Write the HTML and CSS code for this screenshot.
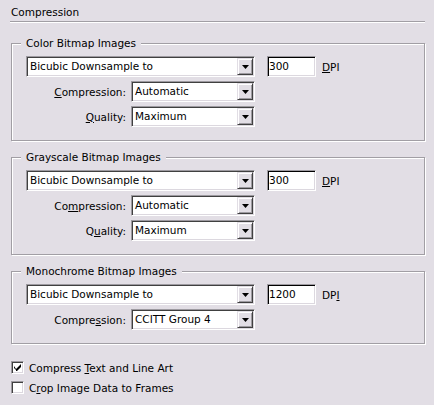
FILE: index.html
```html
<!DOCTYPE html>
<html>
<head>
<meta charset="utf-8">
<link rel="stylesheet" href="styles.css">
</head>
<body>
<div class="panel">
  <div class="section-title">Compression</div>

  <div class="group">
    <div class="legend">Color Bitmap Images</div>
    <div class="row">
      <div class="combo wide"><span class="combo-text">Bicubic Downsample to</span><span class="combo-btn"><svg width="7" height="4" viewBox="0 0 7 4"><polygon points="0,0 7,0 3.5,4" fill="#000"/></svg></span></div>
      <div class="field">300</div>
      <span class="unit"><u>D</u>PI</span>
    </div>
    <div class="row">
      <span class="lbl"><u>C</u>ompression:</span>
      <div class="combo narrow"><span class="combo-text">Automatic</span><span class="combo-btn"><svg width="7" height="4" viewBox="0 0 7 4"><polygon points="0,0 7,0 3.5,4" fill="#000"/></svg></span></div>
    </div>
    <div class="row">
      <span class="lbl"><u>Q</u>uality:</span>
      <div class="combo narrow"><span class="combo-text">Maximum</span><span class="combo-btn"><svg width="7" height="4" viewBox="0 0 7 4"><polygon points="0,0 7,0 3.5,4" fill="#000"/></svg></span></div>
    </div>
  </div>

  <div class="group">
    <div class="legend">Grayscale Bitmap Images</div>
    <div class="row">
      <div class="combo wide"><span class="combo-text">Bicubic Downsample to</span><span class="combo-btn"><svg width="7" height="4" viewBox="0 0 7 4"><polygon points="0,0 7,0 3.5,4" fill="#000"/></svg></span></div>
      <div class="field">300</div>
      <span class="unit"><u>D</u>PI</span>
    </div>
    <div class="row">
      <span class="lbl">Co<u>m</u>pression:</span>
      <div class="combo narrow"><span class="combo-text">Automatic</span><span class="combo-btn"><svg width="7" height="4" viewBox="0 0 7 4"><polygon points="0,0 7,0 3.5,4" fill="#000"/></svg></span></div>
    </div>
    <div class="row">
      <span class="lbl">Q<u>u</u>ality:</span>
      <div class="combo narrow"><span class="combo-text">Maximum</span><span class="combo-btn"><svg width="7" height="4" viewBox="0 0 7 4"><polygon points="0,0 7,0 3.5,4" fill="#000"/></svg></span></div>
    </div>
  </div>

  <div class="group">
    <div class="legend">Monochrome Bitmap Images</div>
    <div class="row">
      <div class="combo wide"><span class="combo-text">Bicubic Downsample to</span><span class="combo-btn"><svg width="7" height="4" viewBox="0 0 7 4"><polygon points="0,0 7,0 3.5,4" fill="#000"/></svg></span></div>
      <div class="field">1200</div>
      <span class="unit">DP<u>I</u></span>
    </div>
    <div class="row">
      <span class="lbl">Compre<u>s</u>sion:</span>
      <div class="combo narrow"><span class="combo-text">CCITT Group 4</span><span class="combo-btn"><svg width="7" height="4" viewBox="0 0 7 4"><polygon points="0,0 7,0 3.5,4" fill="#000"/></svg></span></div>
    </div>
  </div>

  <div class="checks">
    <div class="check-row">
      <span class="checkbox"><svg width="7" height="7" viewBox="0 0 7 7"><path d="M0 2 L0 4 L2 6 L2 7 L3 7 L7 3 L7 0 L2 5 Z" fill="#000"/></svg></span>
      <span>Compress <u>T</u>ext and Line Art</span>
    </div>
    <div class="check-row">
      <span class="checkbox"></span>
      <span>C<u>r</u>op Image Data to Frames</span>
    </div>
  </div>
</div>
</body>
</html>
```

FILE: styles.css
```css
html, body {
  margin: 0;
  background: #e2dee5;
}
body {
  font-family: "DejaVu Sans", "Liberation Sans", sans-serif;
  font-size: 10.5px;
  color: #000;
}
u {
  text-decoration: underline;
  text-underline-offset: 1px;
}
.panel {
  padding: 5px 9px 0 10px;
}
.section-title {
  line-height: 14px;
  padding: 0 0 2px 1px;
  border-bottom: 1px solid #a19ea4;
  box-shadow: 0 1px 0 #fff;
}
.group {
  margin: 21px 0 0 1px;
  border: 1px solid #a19ea4;
  box-shadow: inset 1px 1px 0 #fff, 1px 1px 0 #fff;
  padding: 0 0 13px 14px;
  display: flex;
  flex-direction: column;
  gap: 4px;
}
.group + .group {
  margin-top: 16px;
}
.legend {
  align-self: flex-start;
  margin: -8px 0 2px -5px;
  padding: 0 5px;
  line-height: 14px;
  background: #e2dee5;
}
.row {
  display: flex;
  align-items: center;
  height: 21px;
}
.combo {
  box-sizing: border-box;
  height: 21px;
  display: flex;
  border: 1px solid;
  border-color: #9d9aa0 #fff #fff #9d9aa0;
  padding: 1px;
  box-shadow: inset 1px 1px 0 #404040, inset -1px -1px 0 #dcd8df;
  background: #fff;
}
.combo.wide { width: 229px; }
.combo.narrow { width: 124px; }
.combo-text {
  flex: 1;
  padding-left: 2px;
  line-height: 17px;
  white-space: nowrap;
  overflow: hidden;
}
.combo-btn {
  box-sizing: border-box;
  width: 16px;
  height: 17px;
  background: #e2dee5;
  border: 1px solid;
  border-color: #e2dee5 #404040 #404040 #e2dee5;
  box-shadow: inset 1px 1px 0 #fff, inset -1px -1px 0 #9d9aa0;
  display: flex;
  align-items: center;
  justify-content: center;
}
.combo-btn svg { display: block; margin: 1px 0 0 0; }
.field {
  box-sizing: border-box;
  width: 49px;
  height: 21px;
  margin-left: 12px;
  border: 1px solid;
  border-color: #9d9aa0 #fff #fff #9d9aa0;
  padding: 1px 1px 1px 1px;
  box-shadow: inset 1px 1px 0 #000, inset -1px -1px 0 #dcd8df;
  background: #fff;
  line-height: 17px;
}
.unit {
  margin-left: 6px;
}
.lbl {
  width: 100px;
  text-align: right;
  margin-right: 5px;
  white-space: nowrap;
}
.checks {
  margin: 15px 0 0 1px;
  display: flex;
  flex-direction: column;
  gap: 3px;
}
.check-row {
  display: flex;
  align-items: center;
  height: 17px;
  gap: 5px;
}
.checkbox {
  box-sizing: border-box;
  width: 13px;
  height: 13px;
  border: 1px solid;
  border-color: #9d9aa0 #fff #fff #9d9aa0;
  box-shadow: inset 1px 1px 0 #404040, inset -1px -1px 0 #dcd8df;
  background: #fff;
  display: flex;
  align-items: center;
  justify-content: center;
}
.checkbox svg { display: block; }
```
